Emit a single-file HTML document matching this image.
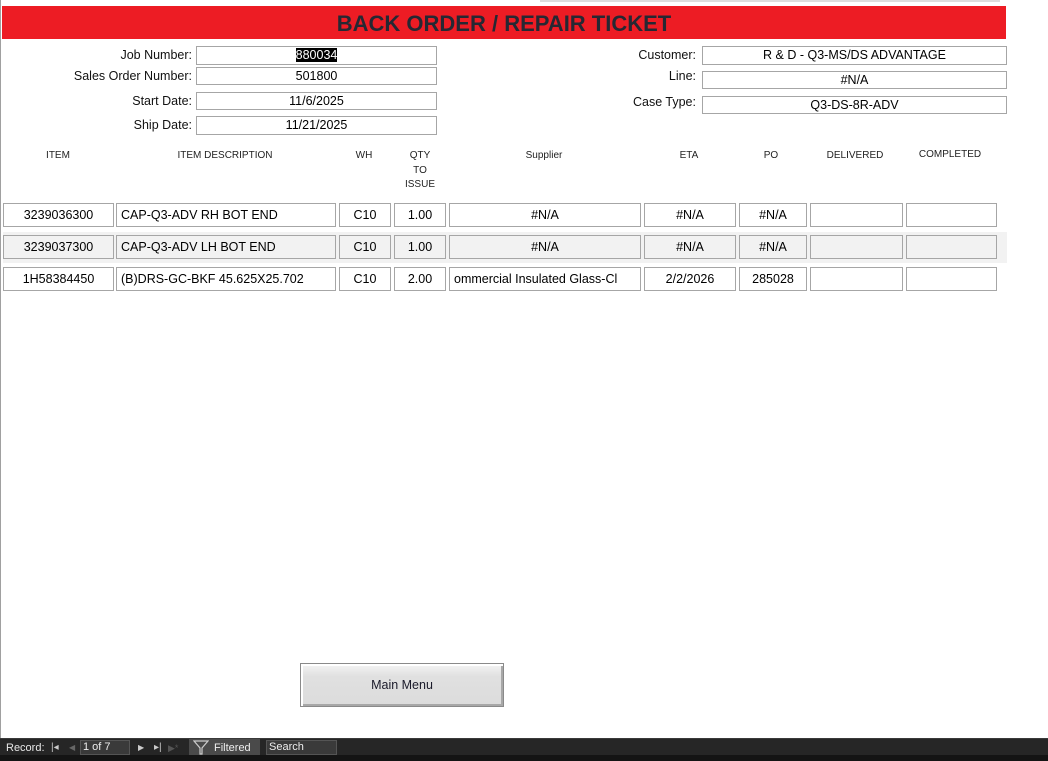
<!DOCTYPE html>
<html><head><style>
*{margin:0;padding:0;box-sizing:border-box}
body{width:1048px;height:761px;background:#fff;position:relative;overflow:hidden;font-family:"Liberation Sans",sans-serif;color:#000}
.a{position:absolute}
.lb{position:absolute;font-size:12.5px;text-align:right;white-space:nowrap;color:#111}
.f{position:absolute;border:1px solid #a6a6a6;background:#fff;font-size:12.5px;text-align:center;line-height:17px;white-space:nowrap;overflow:hidden}
.h{position:absolute;font-size:10px;text-align:center;color:#222;line-height:14.5px}
.c{position:absolute;border:1px solid #a6a6a6;background:#fff;font-size:12.5px;text-align:center;line-height:22px;white-space:nowrap;overflow:hidden;height:24px}
.g .c{background:#f2f2f2}
</style></head><body>
<div class="a" style="left:0;top:0;width:1px;height:738px;background:#a0a0a0"></div>
<div class="a" style="left:540px;top:0;width:460px;height:2px;background:#ddd"></div>
<div class="a" style="left:2px;top:6px;width:1004px;height:33px;background:#ed1c24;text-align:center;font-weight:bold;font-size:22px;line-height:35px;color:#262833">BACK ORDER / REPAIR TICKET</div>

<div class="lb" style="right:856px;top:48px">Job Number:</div>
<div class="lb" style="right:856px;top:69px">Sales Order Number:</div>
<div class="lb" style="right:856px;top:94px">Start Date:</div>
<div class="lb" style="right:856px;top:118px">Ship Date:</div>
<div class="f" style="left:196px;top:46px;width:241px;height:19px"><span style="background:#000;color:#fff">880034</span></div>
<div class="f" style="left:196px;top:67px;width:241px;height:18px">501800</div>
<div class="f" style="left:196px;top:92px;width:241px;height:18px">11/6/2025</div>
<div class="f" style="left:196px;top:116px;width:241px;height:19px">11/21/2025</div>

<div class="lb" style="right:352px;top:48px">Customer:</div>
<div class="lb" style="right:352px;top:69px">Line:</div>
<div class="lb" style="right:352px;top:95px">Case Type:</div>
<div class="f" style="left:702px;top:46px;width:305px;height:19px">R &amp; D - Q3-MS/DS ADVANTAGE</div>
<div class="f" style="left:702px;top:71px;width:305px;height:18px">#N/A</div>
<div class="f" style="left:702px;top:96px;width:305px;height:18px">Q3-DS-8R-ADV</div>

<div class="h" style="left:18px;top:149px;width:80px">ITEM</div>
<div class="h" style="left:145px;top:149px;width:160px">ITEM DESCRIPTION</div>
<div class="h" style="left:344px;top:149px;width:40px">WH</div>
<div class="h" style="left:395px;top:149px;width:50px">QTY<br>TO<br>ISSUE</div>
<div class="h" style="left:494px;top:149px;width:100px">Supplier</div>
<div class="h" style="left:659px;top:149px;width:60px">ETA</div>
<div class="h" style="left:741px;top:149px;width:60px">PO</div>
<div class="h" style="left:815px;top:149px;width:80px">DELIVERED</div>
<div class="h" style="left:905px;top:148px;width:90px">COMPLETED</div>

<div class="a" style="left:3px;top:232px;width:1004px;height:31px;background:#f2f2f2"></div>

<div style="position:absolute;left:0;top:203px">
<div class="c" style="left:3px;width:111px">3239036300</div>
<div class="c" style="left:116px;width:220px;text-align:left;padding-left:4px">CAP-Q3-ADV RH BOT END</div>
<div class="c" style="left:339px;width:52px">C10</div>
<div class="c" style="left:394px;width:52px">1.00</div>
<div class="c" style="left:449px;width:192px">#N/A</div>
<div class="c" style="left:644px;width:92px">#N/A</div>
<div class="c" style="left:739px;width:68px">#N/A</div>
<div class="c" style="left:810px;width:93px"></div>
<div class="c" style="left:906px;width:91px"></div>
</div>
<div class="g" style="position:absolute;left:0;top:235px">
<div class="c" style="left:3px;width:111px">3239037300</div>
<div class="c" style="left:116px;width:220px;text-align:left;padding-left:4px">CAP-Q3-ADV LH BOT END</div>
<div class="c" style="left:339px;width:52px">C10</div>
<div class="c" style="left:394px;width:52px">1.00</div>
<div class="c" style="left:449px;width:192px">#N/A</div>
<div class="c" style="left:644px;width:92px">#N/A</div>
<div class="c" style="left:739px;width:68px">#N/A</div>
<div class="c" style="left:810px;width:93px"></div>
<div class="c" style="left:906px;width:91px"></div>
</div>
<div style="position:absolute;left:0;top:267px">
<div class="c" style="left:3px;width:111px">1H58384450</div>
<div class="c" style="left:116px;width:220px;text-align:left;padding-left:4px">(B)DRS-GC-BKF 45.625X25.702</div>
<div class="c" style="left:339px;width:52px">C10</div>
<div class="c" style="left:394px;width:52px">2.00</div>
<div class="c" style="left:449px;width:192px;text-align:left;padding-left:4px;font-size:12.5px">ommercial Insulated Glass-Cl</div>
<div class="c" style="left:644px;width:92px">2/2/2026</div>
<div class="c" style="left:739px;width:68px">285028</div>
<div class="c" style="left:810px;width:93px"></div>
<div class="c" style="left:906px;width:91px"></div>
</div>

<div class="a" style="left:300px;top:663px;width:204px;height:44px;background:linear-gradient(#f4f4f4,#e0e0e0 30%,#dcdcdc);border:1px solid #8a8a8a;box-shadow:inset 2px 2px 0 #fff,inset -2px -2px 0 #a8a8a8;font-size:12.5px;text-align:center;line-height:42px;color:#1a1a2a">Main Menu</div>

<div class="a" style="left:0;top:738px;width:1048px;height:17px;background:#262626;border-top:1px solid #3a3a3a"></div>
<div class="a" style="left:0;top:755px;width:1048px;height:6px;background:#141414"></div>
<div class="a" style="left:6px;top:741px;font-size:11px;color:#e8e8e8;line-height:14px">Record:</div>
<div class="a" style="left:51px;top:741px;font-size:10px;color:#ccc;line-height:14px">|◂</div>
<div class="a" style="left:69px;top:741px;font-size:8px;color:#666;line-height:14px">◀</div>
<div class="a" style="left:80px;top:740px;width:50px;height:15px;background:#3a3a3a;border:1px solid #555;font-size:11px;color:#eee;line-height:13px;padding-left:2px">1 of 7</div>
<div class="a" style="left:138px;top:741px;font-size:8px;color:#ccc;line-height:14px">▶</div>
<div class="a" style="left:154px;top:741px;font-size:10px;color:#ccc;line-height:14px">▸|</div>
<div class="a" style="left:168px;top:741px;font-size:9px;color:#555;line-height:14px">▶*</div>
<div class="a" style="left:189px;top:739px;width:71px;height:16px;background:#4a4a4a"></div>
<svg class="a" style="left:193px;top:740px" width="16" height="15"><path d="M1 1H15L9 8V14H7V8Z" fill="none" stroke="#ccc" stroke-width="1.2"/></svg>
<div class="a" style="left:214px;top:741px;font-size:11px;color:#eee;line-height:14px">Filtered</div>
<div class="a" style="left:266px;top:740px;width:71px;height:15px;background:#3a3a3a;border:1px solid #555;font-size:11px;color:#eee;line-height:13px;padding-left:2px">Search</div>
</body></html>
